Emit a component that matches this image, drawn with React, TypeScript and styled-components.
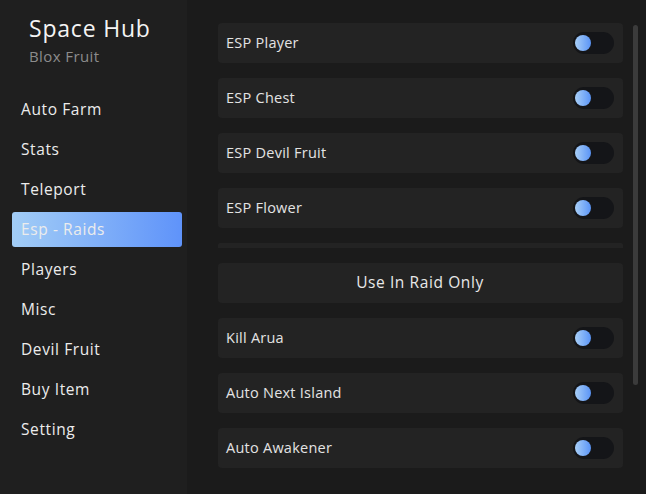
import React, { useState } from "react";
import styled, { createGlobalStyle } from "styled-components";

const GlobalStyle = createGlobalStyle`
  html, body {
    margin: 0;
    padding: 0;
    background: #1b1b1b;
  }
  body {
    font-family: "Open Sans", "Liberation Sans", sans-serif;
  }
`;

const menu = [
  "Auto Farm",
  "Stats",
  "Teleport",
  "Esp - Raids",
  "Players",
  "Misc",
  "Devil Fruit",
  "Buy Item",
  "Setting",
];

type Row =
  | { kind: "toggle"; label: string }
  | { kind: "divider" }
  | { kind: "button"; label: string };

const rows: Row[] = [
  { kind: "toggle", label: "ESP Player" },
  { kind: "toggle", label: "ESP Chest" },
  { kind: "toggle", label: "ESP Devil Fruit" },
  { kind: "toggle", label: "ESP Flower" },
  { kind: "divider" },
  { kind: "button", label: "Use In Raid Only" },
  { kind: "toggle", label: "Kill Arua" },
  { kind: "toggle", label: "Auto Next Island" },
  { kind: "toggle", label: "Auto Awakener" },
];

function App() {
  const [active, setActive] = useState("Esp - Raids");

  return (
    <Window>
      <GlobalStyle />
      <Sidebar>
        <Brand>
          <Title>Space Hub</Title>
          <Subtitle>Blox Fruit</Subtitle>
        </Brand>
        <Menu>
          {menu.map((item) => (
            <MenuItem
              key={item}
              $active={item === active}
              onClick={() => setActive(item)}
            >
              {item}
            </MenuItem>
          ))}
        </Menu>
      </Sidebar>
      <Main>
        <List>
          {rows.map((row, i) => {
            if (row.kind === "divider") return <Divider key={i} />;
            if (row.kind === "button")
              return <ButtonCard key={i}>{row.label}</ButtonCard>;
            return (
              <Card key={i}>
                <Label>{row.label}</Label>
                <Toggle>
                  <Knob />
                </Toggle>
              </Card>
            );
          })}
        </List>
        <ScrollThumb />
      </Main>
    </Window>
  );
}

export default App;

const Window = styled.div`
  display: flex;
  width: 646px;
  height: 494px;
  overflow: hidden;
  background: #1b1b1b;
`;

const Sidebar = styled.div`
  width: 187px;
  flex-shrink: 0;
  background: #1f1f1f;
  display: flex;
  flex-direction: column;
`;

const Brand = styled.div`
  padding: 13px 0 0 29px;
  height: 77px;
  box-sizing: border-box;
`;

const Title = styled.div`
  color: #f4f4f4;
  font-size: 23px;
  line-height: 30px;
  letter-spacing: 0.8px;
`;

const Subtitle = styled.div`
  color: #8c8c8c;
  font-size: 15px;
  line-height: 20px;
  margin-top: 3px;
  letter-spacing: 0.4px;
`;

const Menu = styled.div`
  display: flex;
  flex-direction: column;
  gap: 5px;
  padding: 15px 5px 0 12px;
`;

const MenuItem = styled.div<{ $active?: boolean }>`
  height: 35px;
  display: flex;
  align-items: center;
  padding: 0 0 2px 9px;
  box-sizing: border-box;
  border-radius: 3px;
  font-size: 15.5px;
  letter-spacing: 0.6px;
  color: #ececec;
  cursor: pointer;
  background: ${(p) =>
    p.$active ? "linear-gradient(90deg, #a2cdf6 0%, #5f93fa 100%)" : "transparent"};
`;

const Main = styled.div`
  flex: 1;
  display: flex;
  padding: 23px 0 0 31px;
`;

const List = styled.div`
  width: 405px;
  display: flex;
  flex-direction: column;
  gap: 15px;
`;

const Card = styled.div`
  height: 40px;
  flex-shrink: 0;
  background: #232323;
  border-radius: 4px;
  display: flex;
  align-items: center;
  justify-content: space-between;
  padding: 0 9px 0 8px;
  box-sizing: border-box;
`;

const Divider = styled.div`
  height: 5px;
  flex-shrink: 0;
  background: #232323;
  border-radius: 2px 2px 0 0;
`;

const ButtonCard = styled(Card)`
  justify-content: center;
  padding-bottom: 2px;
  color: #e8e8e8;
  font-size: 15.5px;
  letter-spacing: 0.6px;
  cursor: pointer;
`;

const Label = styled.span`
  color: #e3e3e3;
  font-size: 14.5px;
  letter-spacing: 0.25px;
  margin-bottom: 2px;
`;

const Toggle = styled.div`
  width: 41px;
  height: 22px;
  border-radius: 11px;
  background: #141518;
  display: flex;
  align-items: center;
  padding-left: 2px;
  box-sizing: border-box;
`;

const Knob = styled.div`
  width: 16px;
  height: 16px;
  border-radius: 50%;
  background: linear-gradient(90deg, #a8cff8 0%, #5a94f6 100%);
`;

const ScrollThumb = styled.div`
  width: 5px;
  height: 360px;
  margin: 2px 0 0 10px;
  border-radius: 3px;
  background: #3b3b3b;
`;
